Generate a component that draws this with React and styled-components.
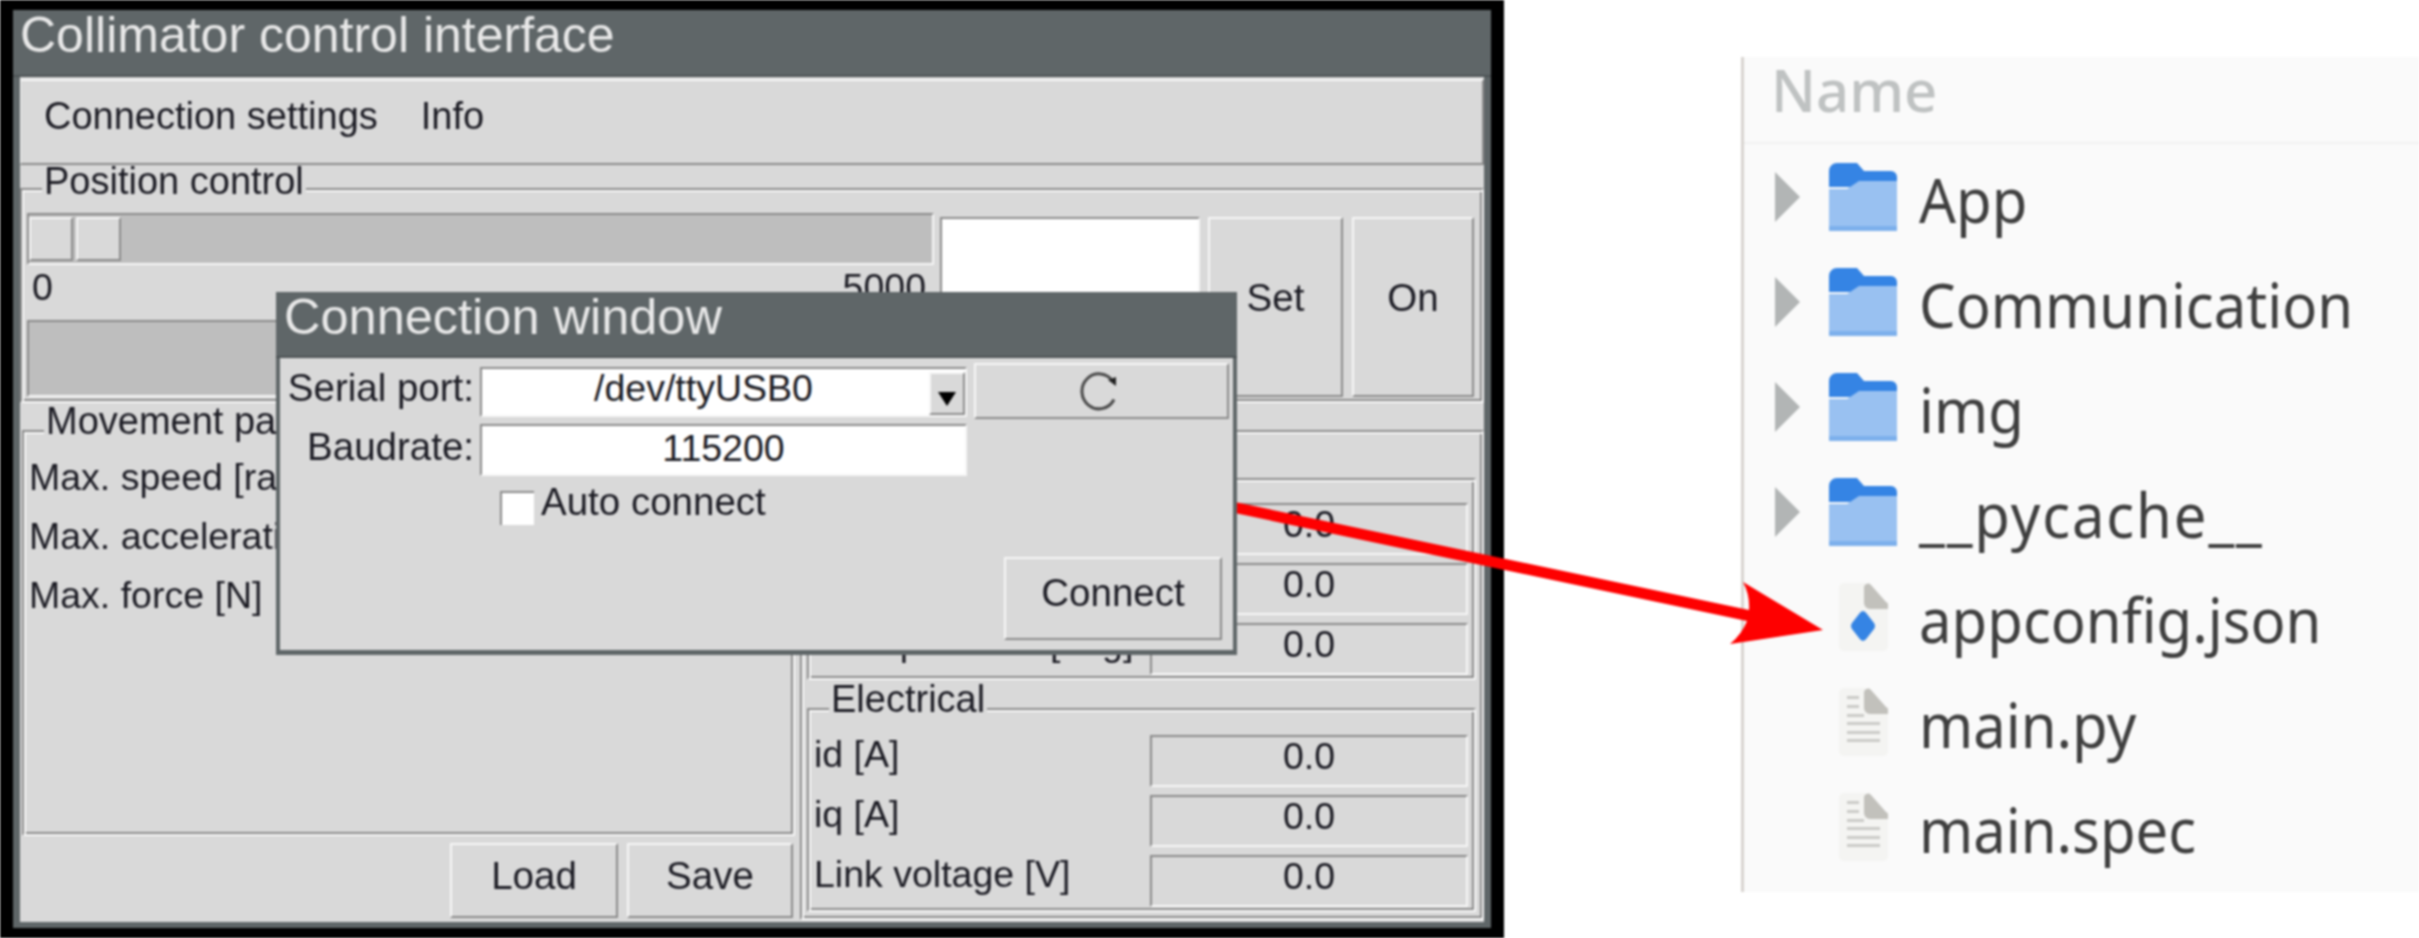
import React from 'react';
import styled, { createGlobalStyle, css } from 'styled-components';

const Global = createGlobalStyle`
  * { box-sizing: border-box; }
  html, body { margin: 0; background: #fff; }
  body { font-family: "Liberation Sans", Arial, sans-serif; color: #1c1c24; }
`;

const raised = css`
  background: #d9d9d9;
  border-style: solid;
  border-width: 2px;
  border-color: #f6f6f6 #8b8b8b #8b8b8b #f6f6f6;
`;

const sunken = css`
  border-style: solid;
  border-width: 2px;
  border-color: #8b8b8b #f6f6f6 #f6f6f6 #8b8b8b;
`;

const Page = styled.div`
  position: relative;
  display: flex;
  width: 2419px;
  height: 938px;
  overflow: hidden;
  filter: blur(0.9px);
`;

const Backdrop = styled.div`
  width: 1504px;
  height: 938px;
  padding: 10px 13px;
  background: #000;
`;

const Window = styled.div`
  display: flex;
  flex-direction: column;
  height: 918px;
  background: #5f6668;
`;

const TitleBar = styled.div`
  flex: none;
  height: ${p => p.$height}px;
  padding-left: ${p => p.$indent}px;
  font-size: ${p => p.$size}px;
  line-height: ${p => p.$line}px;
  color: #e8e8e8;
  background: #5f6668;
  border-bottom: 2px solid #4d5355;
`;

const Content = styled.div`
  flex: 1;
  display: flex;
  flex-direction: column;
  margin: 0 7px 6px;
  padding-top: 2px;
  background: #d9d9d9;
`;

const MenuBar = styled.div`
  ${raised}
  flex: none;
  display: flex;
  gap: 43px;
  height: 86px;
  padding: 0 0 11px 23px;
  align-items: center;
  font-size: 38px;
  border-left-width: 1px;
`;

const Frame = styled.div`
  display: flex;
  flex-direction: column;
  flex: ${p => (p.$grow ? 1 : 'none')};
  margin-top: ${p => p.$top || 0}px;
`;

const Legend = styled.div`
  position: relative;
  z-index: 1;
  align-self: flex-start;
  height: 30px;
  margin: 0 0 ${p => p.$overlap}px 22px;
  padding: 0 2px;
  font-size: 38px;
  line-height: 32px;
  background: #d9d9d9;
`;

const GrooveBox = styled.div`
  flex: ${p => (p.$grow ? 1 : 'none')};
  border-style: solid;
  border-width: 2px;
  border-color: #8b8b8b #f6f6f6 #f6f6f6 #8b8b8b;
  box-shadow: inset 2px 2px 0 #f6f6f6, inset -2px -2px 0 #8b8b8b;
`;

const PositionRow = styled.div`
  display: flex;
  padding: 23px 8px 4px 5px;
`;

const SliderColumn = styled.div`
  display: flex;
  flex-direction: column;
  width: 907px;
  height: 184px;
`;

const Trough = styled.div`
  ${sunken}
  display: flex;
  gap: 3px;
  flex: none;
  height: ${p => p.$height}px;
  padding-top: 2px;
  background: #bebebe;
`;

const SliderHandle = styled.div`
  ${raised}
  width: ${p => p.$width}px;
  height: 44px;
`;

const ScaleLabels = styled.div`
  display: flex;
  flex: none;
  justify-content: space-between;
  height: 55px;
  padding: 0 8px 0 5px;
  font-size: 37.5px;
  line-height: 44px;
`;

const SetpointEntry = styled.div`
  ${sunken}
  width: 260px;
  height: 180px;
  margin: 4px 8px 0 6px;
  background: #fff;
`;

const Button = styled.div`
  ${raised}
  display: flex;
  flex: none;
  align-items: center;
  justify-content: center;
  width: ${p => p.$width}px;
  height: ${p => p.$height}px;
  margin-right: ${p => p.$after || 0}px;
  padding-bottom: ${p => p.$lift || 10}px;
  font-size: 38.5px;
  align-self: flex-end;
`;

const LowerPanes = styled.div`
  display: flex;
  flex: 1;
  gap: 5px;
  margin-top: 2px;
`;

const LeftPane = styled.div`
  display: flex;
  flex-direction: column;
  width: 775px;
  padding-left: 2px;
`;

const RightPane = styled.div`
  display: flex;
  flex-direction: column;
  width: 684px;
  height: 515px;
`;

const ParamList = styled.div`
  padding: 16px 0 0 5px;
`;

const ParamRow = styled.div`
  height: 59px;
  font-size: 37.5px;
  line-height: 59px;
  white-space: nowrap;
`;

const ActionRow = styled.div`
  display: flex;
  flex: none;
  justify-content: flex-end;
  gap: 9px;
  height: 86px;
  padding: 7px 2px 4px 0;
`;

const GroupStack = styled.div`
  display: flex;
  flex-direction: column;
  padding: 21px 6px 0 5px;
`;

const ReadoutList = styled.div`
  display: flex;
  flex-direction: column;
  gap: 8px;
  padding: ${p => p.$top}px 6px 3px 5px;
`;

const ReadoutRow = styled.div`
  display: flex;
  justify-content: space-between;
  height: 52px;
  font-size: 37.5px;
  line-height: 38px;
  white-space: nowrap;
`;

const ReadoutLabel = styled.span`
  padding-left: ${p => p.$indent || 0}px;
`;

const ReadoutValue = styled.div`
  ${sunken}
  flex: none;
  width: 318px;
  text-align: center;
`;

const GroupGap = styled.div`
  height: 3px;
`;

const Dialog = styled.div`
  position: absolute;
  z-index: 3;
  top: 292px;
  left: 276px;
  display: flex;
  flex-direction: column;
  width: 961px;
  height: 363px;
  background: #5f6668;
`;

const DialogBody = styled.div`
  display: grid;
  flex: 1;
  grid-template-columns: 196px 487px 1fr;
  grid-template-rows: 59px 52px 53px 1fr;
  margin: 0 4px 5px;
  padding-top: 5px;
  background: #d9d9d9;
  font-size: 38.5px;
`;

const FieldLabel = styled.div`
  padding: 6px 2px 0 0;
  line-height: 38px;
  text-align: right;
`;

const Field = styled.div`
  ${sunken}
  position: relative;
  margin-left: 4px;
  width: 487px;
  height: ${p => p.$height}px;
  margin-top: ${p => p.$top || 0}px;
  padding-right: ${p => p.$right || 0}px;
  background: #fff;
  font-size: 37.5px;
  line-height: ${p => p.$line}px;
  text-align: center;
`;

const ComboArrow = styled.div`
  ${raised}
  position: absolute;
  top: 3px;
  right: 0;
  display: flex;
  align-items: center;
  justify-content: center;
  width: 36px;
  height: 43px;
  padding-top: 10px;
`;

const RefreshButton = styled.div`
  ${raised}
  display: flex;
  align-items: center;
  justify-content: center;
  width: 255px;
  height: 56px;
  margin-left: 11px;
  padding-right: 6px;
`;

const CheckboxRow = styled.div`
  display: flex;
  grid-column: 1 / 3;
  gap: 7px;
  padding: 17px 0 0 220px;
  line-height: 30px;
`;

const Checkbox = styled.div`
  ${sunken}
  width: 34px;
  height: 34px;
  background: #fff;
  border-right: 0;
  border-bottom: 0;
`;

const AutoLabel = styled.span`
  margin-top: -4px;
`;

const ConnectRow = styled.div`
  display: flex;
  grid-column: 1 / 4;
  justify-content: flex-end;
  padding: 0 11px 10px 0;
`;

const ArrowLayer = styled.svg`
  position: absolute;
  z-index: 2;
  top: 0;
  left: 0;
`;

const FilePanel = styled.div`
  display: flex;
  flex-direction: column;
  flex: 1;
  height: 835px;
  margin: 57px 0 0 237px;
  background: #fafafa;
  border-left: 3px solid #d8d4d0;
`;

const ColumnHeader = styled.div`
  flex: none;
  height: 87px;
  padding-left: 27px;
  font-family: "Noto Sans", sans-serif;
  font-size: 58px;
  font-weight: 500;
  line-height: 66px;
  color: #bfc2c2;
  border-bottom: 2px solid #f1f1f1;
`;

const FileRow = styled.div`
  display: flex;
  flex: none;
  align-items: center;
  height: 105px;
  padding-left: 31px;
`;

const ExpanderSlot = styled.div`
  display: flex;
  flex: none;
  width: 54px;
`;

const IconSlot = styled.div`
  display: flex;
  flex: none;
  justify-content: center;
  width: 68px;
  margin-right: 22px;
`;

const FileName = styled.span`
  display: inline-block;
  margin-top: 4px;
  font-family: "Noto Sans", sans-serif;
  font-size: 58px;
  letter-spacing: ${p => p.$track || 0}px;
  color: #3f3f3f;
  transform: scaleY(1.08);
`;

const FolderIcon = () => (
  <svg width="68" height="68" viewBox="0 0 68 68">
    <path d="M0 8a8 8 0 0 1 8-8h20l7 8h27a6 6 0 0 1 6 6v10H0z" fill="#3584e4" />
    <path d="M0 26h18l12-8h38v50H0z" fill="#99c1f1" />
    <path d="M0 63h68v5H0z" fill="#7db0ec" />
  </svg>
);

const DocIcon = ({ json }) => (
  <svg width="49" height="68" viewBox="0 0 49 68">
    <path d="M5 0h21l23 24v39a5 5 0 0 1-5 5H5a5 5 0 0 1-5-5V5a5 5 0 0 1 5-5z" fill="#f4f4f2" />
    <path d="M25 4a4 4 0 0 1 7-2l15 17a4 4 0 0 1 2 5v2H31a6 6 0 0 1-6-6z" fill="#c2c1bc" />
    {json ? (
      <path d="M24 28q2 0 4 3l7 9q2 3 0 6l-7 9q-2 3-4 3t-4-3l-7-9q-2-3 0-6l7-9q2-3 4-3z" fill="#3584e4" />
    ) : (
      <g fill="#cbcbc8">
        <rect x="8" y="8" width="12" height="3" />
        <rect x="8" y="17" width="12" height="3" />
        <rect x="8" y="26" width="17" height="3" />
        <rect x="8" y="34" width="33" height="3" />
        <rect x="8" y="43" width="33" height="3" />
        <rect x="8" y="51" width="33" height="3" />
      </g>
    )}
  </svg>
);

const Expander = () => (
  <svg width="25" height="50" viewBox="0 0 25 50">
    <path d="M0 0l25 25L0 50z" fill="#b2b5b5" />
  </svg>
);

const RefreshIcon = () => (
  <svg width="42" height="40" viewBox="0 0 42 40" fill="none">
    <path d="M34.9 10.3A17 17.5 0 1 0 36 28.5" stroke="#4a4a4a" strokeWidth="3" />
    <path d="M30 9l8-3v9z" fill="#222" />
  </svg>
);

const folders = [
  { name: 'App' },
  { name: 'Communication' },
  { name: 'img' },
  { name: '__pycache__', track: 1.9 },
];
const files = [
  { name: 'appconfig.json', json: true },
  { name: 'main.py' },
  { name: 'main.spec' },
];
const electrical = ['id [A]', 'iq [A]', 'Link voltage [V]'];

const Readout = ({ label, indent }) => (
  <ReadoutRow>
    <ReadoutLabel $indent={indent}>{label}</ReadoutLabel>
    <ReadoutValue>0.0</ReadoutValue>
  </ReadoutRow>
);

const App = () => (
  <Page>
    <Global />
    <Backdrop>
      <Window>
        <TitleBar $height={67} $indent={7} $size={50} $line={50}>Collimator control interface</TitleBar>
        <Content>
          <MenuBar>
            <span>Connection settings</span>
            <span>Info</span>
          </MenuBar>
          <Frame>
            <Legend $overlap={-7}>Position control</Legend>
            <GrooveBox>
              <PositionRow>
                <SliderColumn>
                  <Trough $height={52}>
                    <SliderHandle $width={44} />
                    <SliderHandle $width={45} />
                  </Trough>
                  <ScaleLabels>
                    <span>0</span>
                    <span>5000</span>
                  </ScaleLabels>
                  <Trough $height={77} />
                </SliderColumn>
                <SetpointEntry />
                <Button $width={135} $height={180} $after={9} $lift={18}>Set</Button>
                <Button $width={122} $height={180} $lift={18}>On</Button>
              </PositionRow>
            </GrooveBox>
          </Frame>
          <LowerPanes>
            <LeftPane>
              <Frame $grow>
                <Legend $overlap={-5}>Movement parameters</Legend>
                <GrooveBox $grow>
                  <ParamList>
                    <ParamRow>Max. speed [rad/s]</ParamRow>
                    <ParamRow>Max. acceleration [rad/s2]</ParamRow>
                    <ParamRow>Max. force [N]</ParamRow>
                  </ParamList>
                </GrooveBox>
              </Frame>
              <ActionRow>
                <Button $width={168} $height={75}>Load</Button>
                <Button $width={166} $height={75}>Save</Button>
              </ActionRow>
            </LeftPane>
            <RightPane>
              <Frame $grow $top={25}>
                <GrooveBox $grow>
                  <GroupStack>
                    <Legend $overlap={-5}>Mechanical</Legend>
                    <GrooveBox>
                      <ReadoutList $top={23}>
                        <Readout label="Position [mm]" />
                        <Readout label="Velocity [rad/s]" />
                        <Readout label="Temperature [deg]" indent={15} />
                      </ReadoutList>
                    </GrooveBox>
                    <GroupGap />
                    <Legend $overlap={-5}>Electrical</Legend>
                    <GrooveBox>
                      <ReadoutList $top={25}>
                        {electrical.map(label => <Readout key={label} label={label} />)}
                      </ReadoutList>
                    </GrooveBox>
                  </GroupStack>
                </GrooveBox>
              </Frame>
            </RightPane>
          </LowerPanes>
        </Content>
      </Window>
    </Backdrop>
    <FilePanel>
      <ColumnHeader>Name</ColumnHeader>
      {folders.map(folder => (
        <FileRow key={folder.name}>
          <ExpanderSlot><Expander /></ExpanderSlot>
          <IconSlot><FolderIcon /></IconSlot>
          <FileName $track={folder.track}>{folder.name}</FileName>
        </FileRow>
      ))}
      {files.map(file => (
        <FileRow key={file.name}>
          <ExpanderSlot />
          <IconSlot><DocIcon json={file.json} /></IconSlot>
          <FileName>{file.name}</FileName>
        </FileRow>
      ))}
    </FilePanel>
    <ArrowLayer width="2419" height="938" viewBox="0 0 2419 938">
      <path d="M1230 501L1749 610Q1750 595 1743 582L1823 630L1730 644Q1742 634 1747 621L1230 512z" fill="#fe0000" />
    </ArrowLayer>
    <Dialog>
      <TitleBar $height={66} $indent={8} $size={50.5} $line={50}>Connection window</TitleBar>
      <DialogBody>
        <FieldLabel>Serial port:</FieldLabel>
        <Field $height={50} $top={4} $right={40} $line={38}>
          /dev/ttyUSB0
          <ComboArrow>
            <svg width="18" height="14" viewBox="0 0 18 14"><path d="M0 0h18L9 14z" fill="#000" /></svg>
          </ComboArrow>
        </Field>
        <RefreshButton><RefreshIcon /></RefreshButton>
        <FieldLabel>Baudrate:</FieldLabel>
        <Field $height={52} $top={2} $line={44}>115200</Field>
        <div />
        <CheckboxRow>
          <Checkbox />
          <AutoLabel>Auto connect</AutoLabel>
        </CheckboxRow>
        <div />
        <ConnectRow>
          <Button $width={218} $height={83} $lift={12}>Connect</Button>
        </ConnectRow>
      </DialogBody>
    </Dialog>
  </Page>
);

export default App;
